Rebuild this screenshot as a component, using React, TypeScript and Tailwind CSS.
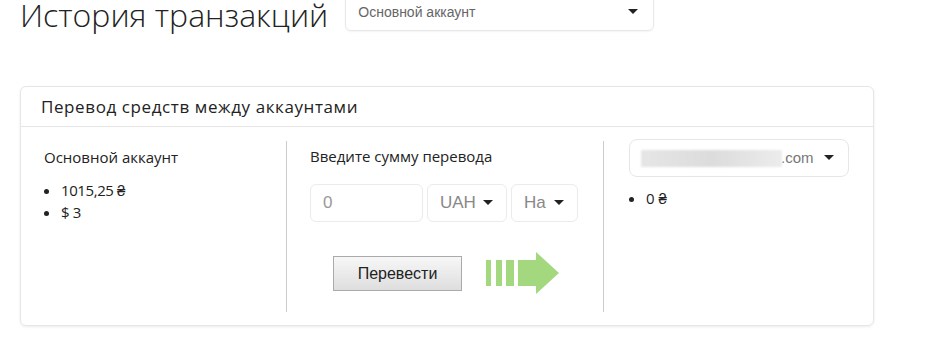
import { useState } from "react";

function Caret() {
  return (
    <svg width="10" height="6" viewBox="0 0 10 6" className="shrink-0">
      <path d="M0 0 L10 0 L5 5 Z" fill="#222" />
    </svg>
  );
}

function GreenArrow() {
  return (
    <svg width="74" height="46" viewBox="0 0 74 46">
      <g fill="#a3d87f">
        <rect x="0" y="8" width="5" height="26" />
        <rect x="10" y="8" width="6" height="26" />
        <rect x="20" y="8" width="8" height="26" />
        <rect x="32" y="8" width="20" height="26" />
        <path d="M50 0 L73 21 L50 42 Z" />
      </g>
    </svg>
  );
}

function App() {
  const [amount, setAmount] = useState("");

  return (
    <div className="w-[946px] h-[347px] bg-white overflow-hidden font-['Open_Sans',sans-serif] text-[#222]">
      <div className="flex items-start gap-[17px] pl-5">
        <h1 className="text-[32px] font-light leading-[30px]">История транзакций</h1>
        <div className="w-[309px] h-[42px] -mt-[11px] border border-[#e8e8e8] rounded-md shadow-[0_1px_2px_rgba(0,0,0,0.05)] flex items-center justify-between pl-3 pr-[15px] pt-[4px]">
          <span className="text-[14px] text-[#666] font-['Liberation_Sans',sans-serif]">Основной аккаунт</span>
          <Caret />
        </div>
      </div>

      <div className="ml-5 mt-[55px] w-[854px] h-[240px] border border-[#e6e6e6] rounded-md shadow-[0_1px_3px_rgba(0,0,0,0.08)] flex flex-col">
        <div className="h-[40px] border-b border-[#e6e6e6] flex items-center pl-5 text-[17px] tracking-[0.6px]">
          Перевод средств между аккаунтами
        </div>
        <div className="flex flex-1 pt-[14px] pb-[13px]">
          <div className="w-[266px] border-r border-[#ccc] pl-[23px] pt-[6px]">
            <div className="text-[15px] leading-5">Основной аккаунт</div>
            <ul className="mt-[12px] list-disc pl-[17px] text-[15px] leading-[22px] tracking-[-0.4px]">
              <li>1015,25 ₴</li>
              <li>$ 3</li>
            </ul>
          </div>

          <div className="w-[317px] border-r border-[#ccc] pl-[23px] pt-[5px]">
            <div className="text-[15px] leading-5">Введите сумму перевода</div>
            <div className="flex gap-1 mt-[18px] font-['Liberation_Sans',sans-serif] text-[17px] text-[#888]">
              <input
                value={amount}
                onChange={(e) => setAmount(e.target.value)}
                placeholder="0"
                className="w-[113px] h-[38px] border border-[#ebebeb] rounded-md px-3 outline-none placeholder:text-[#999]"
              />
              <div className="w-[80px] h-[38px] border border-[#ebebeb] rounded-md flex items-center justify-between pl-3 pr-[13px]">
                <span>UAH</span>
                <Caret />
              </div>
              <div className="w-[67px] h-[38px] border border-[#ebebeb] rounded-md flex items-center justify-between pl-[12px] pr-[13px]">
                <span>На</span>
                <Caret />
              </div>
            </div>
            <div className="flex items-start mt-[34px] ml-[23px]">
              <button className="w-[129px] h-[35px] border border-[#aaa] bg-gradient-to-b from-[#f7f7f7] to-[#dedede] text-[16px] text-[#222] font-['Liberation_Sans',sans-serif]">
                Перевести
              </button>
              <div className="ml-[24px] -mt-[4px]">
                <GreenArrow />
              </div>
            </div>
          </div>

          <div className="flex-1 pl-[25px] -mt-[2px]">
            <div className="w-[220px] h-[38px] border border-[#e6e6e6] rounded-lg flex items-center pl-[11px] pr-[14px]">
              <div className="w-[141px] h-[17px] bg-gradient-to-r from-[#e6e6e6] via-[#dcdcdc] to-[#ececec] blur-[1px]" />
              <span className="text-[15px] text-[#777] font-['Liberation_Sans',sans-serif] -ml-[1px]">.com</span>
              <span className="ml-auto"><Caret /></span>
            </div>
            <ul className="mt-[10px] list-disc pl-[17px] text-[15px] leading-[22px]">
              <li>0 ₴</li>
            </ul>
          </div>
        </div>
      </div>
    </div>
  );
}

export default App;
